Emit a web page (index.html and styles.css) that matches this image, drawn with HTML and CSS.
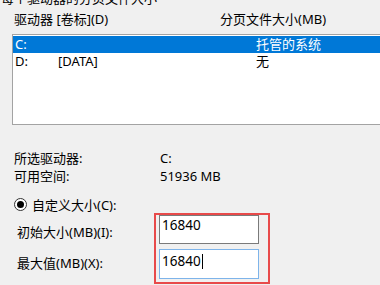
FILE: index.html
```html
<!DOCTYPE html>
<html lang="zh-CN">
<head>
<meta charset="utf-8">
<link rel="stylesheet" href="styles.css">
</head>
<body>
<div class="page">
  <div class="title">每个驱动器的分页文件大小</div>
  <div class="colhead">
    <span class="ch-drive">驱动器 [卷标](D)</span>
    <span>分页文件大小(MB)</span>
  </div>
  <div class="listbox">
    <div class="row selected"><span>C:</span><span></span><span>托管的系统</span></div>
    <div class="row"><span>D:</span><span>[DATA]</span><span>无</span></div>
  </div>
  <div class="info">
    <span>所选驱动器:</span><span>C:</span>
    <span>可用空间:</span><span>51936 MB</span>
  </div>
  <div class="radio-row">
    <span class="radio"><span class="dot"></span></span>
    <span>自定义大小(C):</span>
  </div>
  <div class="fields">
    <span class="flabel l1">初始大小(MB)(I):</span>
    <div class="input i1">16840</div>
    <span class="flabel l2">最大值(MB)(X):</span>
    <div class="input i2 focused">16840<span class="caret"></span></div>
    <div class="annot"></div>
  </div>
</div>
</body>
</html>
```
FILE: styles.css
```css
html, body {
  margin: 0;
  padding: 0;
}
body {
  width: 380px;
  height: 285px;
  overflow: hidden;
  background: #f0f0f0;
  color: #000;
  font-family: "Noto Sans", "Noto Sans CJK SC", sans-serif;
  font-size: 13px;
}
.page {
  width: 380px;
}
.title {
  height: 13px;
  line-height: 13px;
  margin-top: -8px;
  padding-left: 1px;
  white-space: nowrap;
}
.colhead {
  display: flex;
  margin-top: 6px;
  height: 17px;
  line-height: 17px;
  padding-left: 14px;
  white-space: nowrap;
}
.ch-drive {
  width: 206px;
}
.listbox {
  margin: 6px 0 0 12px;
  width: 367px;
  height: 88px;
  padding-top: 1px;
  background: #fff;
  border: 1px solid #a3a3a3;
  border-right: none;
}
.row {
  display: grid;
  grid-template-columns: 43px 198px 1fr;
  height: 17px;
  line-height: 17px;
  padding-left: 2px;
  white-space: nowrap;
}
.row.selected {
  background: #0078d7;
  color: #fff;
}
.info {
  display: grid;
  grid-template-columns: 146px 1fr;
  margin-top: 24px;
  padding-left: 14px;
  line-height: 18px;
}
.radio-row {
  display: flex;
  align-items: center;
  gap: 5px;
  margin-top: 10px;
  height: 18px;
  padding-left: 14px;
}
.radio {
  width: 13px;
  height: 13px;
  box-sizing: border-box;
  border: 1px solid #333;
  border-radius: 50%;
  background: #fff;
  display: flex;
  align-items: center;
  justify-content: center;
}
.dot {
  width: 7px;
  height: 7px;
  border-radius: 50%;
  background: #000;
}
.fields {
  position: relative;
  display: grid;
  grid-template-columns: 142px 100px;
  grid-template-rows: 29px 30px;
  row-gap: 5px;
  padding-left: 17px;
  padding-top: 2px;
  padding-bottom: 5px;
}
.flabel {
  line-height: 18px;
  white-space: nowrap;
}
.l1 {
  margin-top: 8px;
}
.l2 {
  margin-top: 5px;
}
.input {
  box-sizing: border-box;
  background: #fff;
  border: 1px solid #7a7a7a;
  padding: 1px 0 0 2px;
  line-height: 16px;
  font-size: 13.5px;
}
.input.focused {
  border-color: #7eb4ea;
  padding-top: 3px;
}
.caret {
  display: inline-block;
  width: 1px;
  height: 15px;
  background: #000;
  vertical-align: -3px;
  margin-left: 1px;
}
.annot {
  position: absolute;
  left: 154px;
  top: 0;
  width: 116px;
  height: 71px;
  box-sizing: border-box;
  border: 2px solid #e84a4a;
}
```
